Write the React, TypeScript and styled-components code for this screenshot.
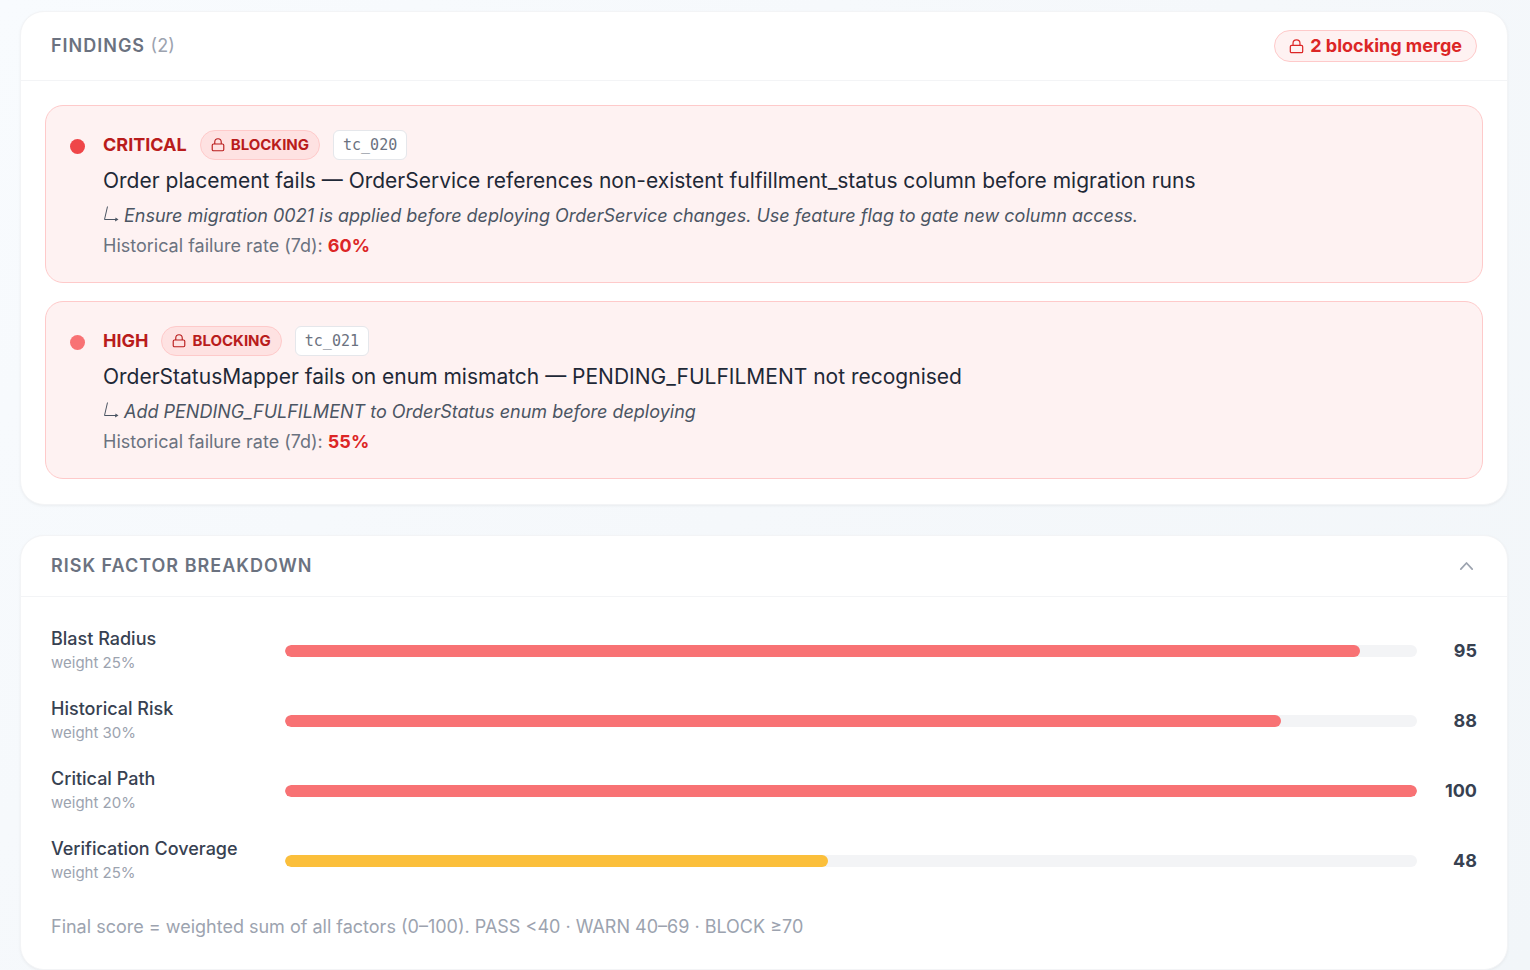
import React, { useState } from "react";
import styled, { createGlobalStyle } from "styled-components";

const GlobalStyle = createGlobalStyle`
  *, *::before, *::after { box-sizing: border-box; }
  body {
    margin: 0;
    min-height: 100vh;
    font-family: Inter, "Liberation Sans", sans-serif;
    font-size: 18px;
    line-height: 24px;
    color: #1f2937;
    background: linear-gradient(135deg, #f8fbfe 0%, #f5f8fb 50%, #f2f6f9 100%);
  }
  h2, h3, p, ul { margin: 0; padding: 0; }
`;

const Page = styled.main`
  display: flex;
  flex-direction: column;
  gap: 30px;
  padding: 11px 22px 0 20px;
`;

const Card = styled.section`
  background: #fff;
  border: 1px solid #f3f4f6;
  border-radius: 24px;
  box-shadow: 0 1px 3px rgba(0, 0, 0, 0.05);
`;

const CardHeader = styled.header`
  display: flex;
  align-items: center;
  justify-content: space-between;
  padding: 18px 30px;
  border-bottom: 1px solid #f3f4f6;
`;

const CardTitle = styled.h2`
  font-size: 18px;
  line-height: 24px;
  font-weight: 600;
  letter-spacing: 1px;
  color: #6b7280;
`;

const Count = styled.span`
  font-weight: 400;
  letter-spacing: 0;
  color: #9ca3af;
`;

const MergeBadge = styled.span`
  display: inline-flex;
  align-items: center;
  gap: 6px;
  padding: 3px 14px;
  border: 1px solid #fecaca;
  border-radius: 16px;
  background: #fef2f2;
  color: #dc2626;
  font-weight: 700;
`;

const FindingList = styled.ul`
  display: flex;
  flex-direction: column;
  gap: 18px;
  padding: 24px 24px 25px;
  list-style: none;
`;

const Finding = styled.li`
  display: flex;
  gap: 18px;
  padding: 24px;
  border: 1px solid #fecaca;
  border-radius: 18px;
  background: #fef2f2;
`;

const Dot = styled.span<{ $color: string }>`
  flex: none;
  width: 15px;
  height: 15px;
  margin-top: 9px;
  border-radius: 50%;
  background: ${(p) => p.$color};
`;

const FindingBody = styled.div`
  flex: 1;
  min-width: 0;
`;

const TagRow = styled.div`
  display: flex;
  flex-wrap: wrap;
  align-items: center;
  gap: 13px;
  margin-bottom: 6px;
`;

const Severity = styled.span`
  font-weight: 700;
  color: #b91c1c;
`;

const BlockingBadge = styled.span`
  display: inline-flex;
  align-items: center;
  gap: 6px;
  height: 30px;
  padding: 0 10px;
  border: 1px solid #fecaca;
  border-radius: 15px;
  background: #fee2e2;
  color: #b91c1c;
  font-size: 15px;
  font-weight: 700;
`;

const TestCase = styled.code`
  display: inline-flex;
  align-items: center;
  height: 30px;
  padding: 0 9px;
  border: 1px solid #e5e7eb;
  border-radius: 6px;
  background: #fff;
  color: #6b7280;
  font-family: "DejaVu Sans Mono", monospace;
  font-size: 15px;
`;

const FindingTitle = styled.h3`
  margin-bottom: 6px;
  font-size: 21px;
  line-height: 30px;
  font-weight: 400;
`;

const Advice = styled.p`
  margin-bottom: 4px;
  line-height: 28px;
  font-style: italic;
  color: #4b5563;
`;

const TurnArrow = styled.svg`
  margin-right: 5px;
`;

const Rate = styled.p`
  color: #6b7280;

  strong {
    font-weight: 700;
    color: #dc2626;
  }
`;

const ToggleHeader = styled.button`
  display: flex;
  align-items: center;
  justify-content: space-between;
  width: 100%;
  padding: 18px 30px;
  border: 0;
  border-bottom: 1px solid #f3f4f6;
  background: none;
  font-family: inherit;
  text-align: left;
  cursor: pointer;
`;

const Breakdown = styled.div`
  padding: 30px;
`;

const FactorList = styled.ul`
  display: flex;
  flex-direction: column;
  gap: 22px;
  margin-bottom: 30px;
  list-style: none;
`;

const Factor = styled.li`
  display: grid;
  grid-template-columns: 210px 1fr 36px;
  align-items: center;
  gap: 24px;
`;

const FactorName = styled.div`
  font-weight: 500;
  color: #374151;
`;

const Weight = styled.div`
  font-size: 15px;
  color: #9ca3af;
`;

const Track = styled.div`
  height: 12px;
  overflow: hidden;
  border-radius: 6px;
  background: #f3f4f6;
`;

const Fill = styled.div<{ $color: string }>`
  height: 100%;
  border-radius: 6px;
  background: ${(p) => p.$color};
`;

const Score = styled.span`
  display: flex;
  justify-content: flex-end;
  font-weight: 700;
  color: #374151;
`;

const Footnote = styled.p`
  color: #9ca3af;
`;

function Lock({ size }: { size: number }) {
  return (
    <svg width={size} height={size} viewBox="0 0 16 16" fill="none" stroke="currentColor" strokeWidth="1.3" strokeLinejoin="round" aria-hidden="true">
      <rect x="1.4" y="6.8" width="13.2" height="7.8" rx="1.4" />
      <path d="M4.3 6.8V4.6a3.7 3.7 0 0 1 7.4 0v2.2" />
    </svg>
  );
}

const findings = [
  {
    severity: "CRITICAL",
    dot: "#ef4649",
    test: "tc_020",
    title: "Order placement fails — OrderService references non-existent fulfillment_status column before migration runs",
    advice: "Ensure migration 0021 is applied before deploying OrderService changes. Use feature flag to gate new column access.",
    rate: 60,
  },
  {
    severity: "HIGH",
    dot: "#f87274",
    test: "tc_021",
    title: "OrderStatusMapper fails on enum mismatch — PENDING_FULFILMENT not recognised",
    advice: "Add PENDING_FULFILMENT to OrderStatus enum before deploying",
    rate: 55,
  },
];

const factors = [
  { name: "Blast Radius", weight: 25, score: 95 },
  { name: "Historical Risk", weight: 30, score: 88 },
  { name: "Critical Path", weight: 20, score: 100 },
  { name: "Verification Coverage", weight: 25, score: 48 },
];

export default function App() {
  const [open, setOpen] = useState(true);
  return (
    <>
      <GlobalStyle />
      <Page>
        <Card>
          <CardHeader>
            <CardTitle>
              FINDINGS <Count>({findings.length})</Count>
            </CardTitle>
            <MergeBadge>
              <Lock size={15} />
              2 blocking merge
            </MergeBadge>
          </CardHeader>
          <FindingList>
            {findings.map((f) => (
              <Finding key={f.test}>
                <Dot $color={f.dot} />
                <FindingBody>
                  <TagRow>
                    <Severity>{f.severity}</Severity>
                    <BlockingBadge>
                      <Lock size={14} />
                      BLOCKING
                    </BlockingBadge>
                    <TestCase>{f.test}</TestCase>
                  </TagRow>
                  <FindingTitle>{f.title}</FindingTitle>
                  <Advice>
                    <TurnArrow width="16" height="16" viewBox="0 0 16 16" fill="none" stroke="currentColor" aria-hidden="true">
                      <path d="M4.5 0.5L1.5 13.5H13" />
                      <path d="M12.5 11.5L15.5 13.5L12 15.5Z" fill="currentColor" stroke="none" />
                    </TurnArrow>
                    {f.advice}
                  </Advice>
                  <Rate>
                    Historical failure rate (7d): <strong>{f.rate}%</strong>
                  </Rate>
                </FindingBody>
              </Finding>
            ))}
          </FindingList>
        </Card>

        <Card>
          <ToggleHeader type="button" aria-expanded={open} onClick={() => setOpen(!open)}>
            <CardTitle as="span">RISK FACTOR BREAKDOWN</CardTitle>
            <svg width="21" height="21" viewBox="0 0 24 24" fill="none" stroke="#9ca3af" strokeWidth="2" strokeLinecap="round" strokeLinejoin="round" aria-hidden="true">
              <path d={open ? "M5.5 15l6.5-7 6.5 7" : "M5.5 9l6.5 7 6.5-7"} />
            </svg>
          </ToggleHeader>
          {open && (
            <Breakdown>
              <FactorList>
                {factors.map((f) => (
                  <Factor key={f.name}>
                    <div>
                      <FactorName>{f.name}</FactorName>
                      <Weight>weight {f.weight}%</Weight>
                    </div>
                    <Track>
                      <Fill $color={f.score >= 70 ? "#f87274" : "#fbbf3b"} style={{ width: `${f.score}%` }} />
                    </Track>
                    <Score>{f.score}</Score>
                  </Factor>
                ))}
              </FactorList>
              <Footnote>Final score = weighted sum of all factors (0–100). PASS &lt;40 · WARN 40–69 · BLOCK ≥70</Footnote>
            </Breakdown>
          )}
        </Card>
      </Page>
    </>
  );
}
